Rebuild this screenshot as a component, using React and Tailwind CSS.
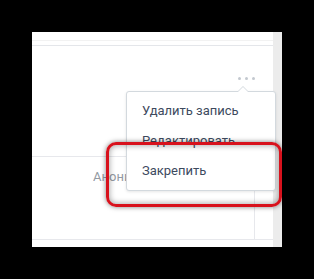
export default function App() {
  return (
    <main className="relative h-[279px] w-[314px] overflow-hidden bg-black font-['Roboto',sans-serif] text-[13px]">
      <div className="ml-[32px] mt-[32px] flex h-[215px] w-[250px] bg-white">
        <div className="flex flex-1 flex-col">
          <div className="h-[9px] border-b border-[#f2f2f2]" />
          <div className="h-[5px] border-b border-[#e4e6ea]" />
          <div className="flex h-[111px] items-start justify-end border-b border-[#e7e8ec] pr-[18px] pt-[31px]">
            <div className="flex gap-[4px]">
              <span className="h-[3px] w-[3px] rounded-full bg-[#c3c8cf]" />
              <span className="h-[3px] w-[3px] rounded-full bg-[#c3c8cf]" />
              <span className="h-[3px] w-[3px] rounded-full bg-[#c3c8cf]" />
            </div>
          </div>
          <div className="flex h-[83px] border-b border-[#e7e8ec]">
            <div className="flex-1 pl-[61px] pt-[12px] text-[#939aa3]">
              <span className="inline-block w-[33px] overflow-hidden whitespace-nowrap leading-[16px]">Анонимно</span>
            </div>
            <div className="w-[19px] border-l border-[#e7e8ec]" />
          </div>
        </div>
        <div className="w-[9px] bg-[#ececec]" />
      </div>

      <div className="absolute left-[126px] top-[91px] w-[150px] rounded-[3px] border border-[#d3d9de] bg-white py-[4px] text-[#3d4a5e] shadow-[0_1px_3px_rgba(0,0,0,0.1)]">
        <div className="absolute -top-[6px] right-[26px] h-0 w-0 border-x-[6px] border-b-[6px] border-x-transparent border-b-[#d3d9de]" />
        <div className="absolute -top-[5px] right-[27px] h-0 w-0 border-x-[5px] border-b-[5px] border-x-transparent border-b-white" />
        <div className="flex h-[30px] items-center pl-[15px]">Удалить запись</div>
        <div className="flex h-[30px] items-center pl-[15px]">Редактировать</div>
        <div className="flex h-[30px] items-center pl-[15px]">Закрепить</div>
      </div>

      <div className="absolute left-[106px] top-[142px] h-[65px] w-[176px] rounded-[10px] border-[3px] border-[#d8121d] shadow-[0_0_5px_rgba(0,0,0,0.5),inset_0_0_6px_rgba(0,0,0,0.4)]" />
    </main>
  );
}
